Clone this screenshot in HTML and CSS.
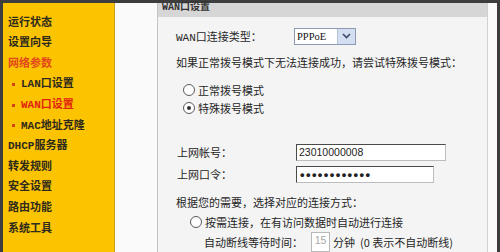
FILE: index.html
```html
<!DOCTYPE html>
<html lang="zh">
<head>
<meta charset="utf-8">
<title>WAN口设置</title>
<link rel="stylesheet" href="styles.css">
</head>
<body>
<div class="frame">
  <nav class="sidebar">
    <div class="item">运行状态</div>
    <div class="item">设置向导</div>
    <div class="item active">网络参数</div>
    <div class="item sub"><span class="dot"></span>LAN口设置</div>
    <div class="item sub current"><span class="dot"></span>WAN口设置</div>
    <div class="item sub"><span class="dot"></span>MAC地址克隆</div>
    <div class="item">DHCP服务器</div>
    <div class="item">转发规则</div>
    <div class="item">安全设置</div>
    <div class="item">路由功能</div>
    <div class="item">系统工具</div>
  </nav>
  <main class="panel">
    <div class="panel-title">WAN口设置</div>
    <div class="panel-body">
      <div class="row r-type">
        <span class="label">WAN口连接类型：</span>
        <span class="select"><span class="select-text">PPPoE</span><span class="select-btn"><svg width="9" height="6" viewBox="0 0 9 6"><path d="M1 1 L4.5 4.5 L8 1" fill="none" stroke="#3b4a6b" stroke-width="1.6"/></svg></span></span>
      </div>
      <div class="row r-hint">如果正常拨号模式下无法连接成功，请尝试特殊拨号模式：</div>
      <div class="row r-radio1"><span class="radio"></span>正常拨号模式</div>
      <div class="row r-radio2"><span class="radio checked"></span>特殊拨号模式</div>
      <div class="row r-acc">
        <span class="label">上网帐号：</span>
        <span class="input w150">23010000008</span>
      </div>
      <div class="row r-pwd">
        <span class="label">上网口令：</span>
        <span class="input w138 pwd">••••••••••••</span>
      </div>
      <div class="row r-mode">根据您的需要，选择对应的连接方式：</div>
      <div class="row r-radio3"><span class="radio"></span>按需连接，在有访问数据时自动进行连接</div>
      <div class="row r-wait">
        <span>自动断线等待时间：</span>
        <span class="input small">15</span>
        <span>分钟 &nbsp;(0 表示不自动断线)</span>
      </div>
    </div>
  </main>
</div>
</body>
</html>
```

FILE: styles.css
```css
html, body {
  margin: 0;
  padding: 0;
}
body {
  width: 500px;
  height: 252px;
  overflow: hidden;
  background: #3d3d3d;
  font-family: "Liberation Mono", "Noto Sans CJK SC", monospace;
}
.frame {
  display: flex;
  box-sizing: border-box;
  height: 252px;
  margin: 3px 3px 0 3px;
  background: #fafafa;
}
.sidebar {
  width: 112px;
  flex: none;
  box-sizing: border-box;
  background: #fcc300;
  border-right: 1px solid #c9a21a;
  padding: 9.7px 0 0 5px;
}
.item {
  height: 20.6px;
  line-height: 20.6px;
  font-size: 11px;
  font-weight: 700;
  color: #2e2a1c;
  white-space: nowrap;
  display: flex;
  align-items: center;
}
.item.active {
  color: #e24a1c;
}
.item.sub {
  padding-left: 4px;
}
.item.current {
  color: #e2230f;
}
.dot {
  width: 3px;
  height: 3px;
  background: #d8401a;
  margin-right: 6px;
}
.panel {
  flex: none;
  width: 331px;
  margin-left: 42px;
  box-sizing: border-box;
  background: #f4f4f4;
  border-left: 1px solid #c4c4c4;
  border-right: 1px solid #d0d0d0;
  font-family: "Noto Sans CJK SC", sans-serif;
  font-size: 11px;
  color: #262626;
}
.panel-title {
  height: 14px;
  background: #d6d6d6;
  font-family: "Liberation Mono", "Noto Sans CJK SC", monospace;
  font-size: 10px;
  line-height: 10px;
  padding-left: 4px;
  color: #333;
  font-weight: 700;
}
.panel-body {
  padding-left: 18px;
}
.row {
  display: flex;
  align-items: center;
  white-space: nowrap;
}
.label {
  width: 119px;
  flex: none;
}
.r-type { height: 18px; margin-top: 10px; }
.r-type .label { font-family: "Liberation Mono", "Noto Sans CJK SC", monospace; width: 118px; }
.r-hint { height: 16px; margin-top: 9px; }
.r-radio1 { height: 18px; margin-top: 11px; padding-left: 7px; }
.r-radio2 { height: 18px; padding-left: 7px; }
.r-acc { height: 17px; margin-top: 26.5px; padding-left: 1px; }
.r-pwd { height: 17px; margin-top: 5px; padding-left: 1px; }
.r-mode { height: 16px; margin-top: 11px; }
.r-radio3 { height: 18px; margin-top: 3px; padding-left: 14px; }
.r-wait { height: 20px; margin-top: 1px; padding-left: 28px; }

.select {
  display: flex;
  height: 17px;
  box-sizing: border-box;
  border: 1px solid #8a9bb3;
  background: #fff;
}
.select-text {
  width: 42px;
  font-family: "Liberation Serif", serif;
  font-size: 10.5px;
  line-height: 15px;
  padding-left: 2px;
  box-sizing: border-box;
  color: #111;
}
.select-btn {
  width: 17px;
  background: #d3dff0;
  border-left: 1px solid #b6c4da;
  display: flex;
  align-items: center;
  justify-content: center;
}
.radio {
  width: 10px;
  height: 10px;
  border: 1px solid #5a5a5a;
  border-radius: 50%;
  background: #fff;
  margin-right: 3px;
  flex: none;
  position: relative;
}
.radio.checked::after {
  content: "";
  position: absolute;
  left: 3px;
  top: 3px;
  width: 4px;
  height: 4px;
  border-radius: 50%;
  background: #333;
}
.input {
  height: 17px;
  box-sizing: border-box;
  border: 1px solid #4a4a4a;
  border-right-color: #bdbdbd;
  border-bottom-color: #bdbdbd;
  background: #fff;
  font-family: "Liberation Sans", sans-serif;
  font-size: 10.5px;
  line-height: 15px;
  padding-left: 2px;
  color: #222;
}
.w150 { width: 150px; }
.w138 { width: 138px; }
.pwd {
  font-size: 13px;
  letter-spacing: 1.4px;
  font-weight: 700;
  padding-left: 3px;
}
.input.small {
  width: 19px;
  height: 20px;
  margin-left: 8px;
  margin-right: 3px;
  color: #a8a8a8;
  border-color: #b8b8b8;
  text-align: center;
  padding-left: 0;
}
```
